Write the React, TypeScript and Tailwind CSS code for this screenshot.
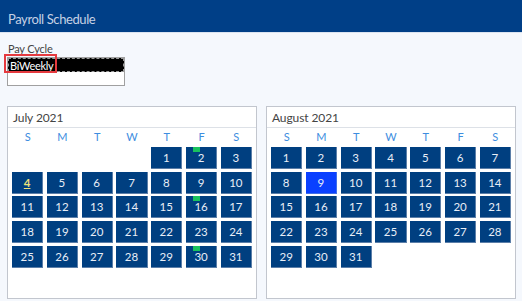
import React from "react";

// ── Data ───────────────────────────────────────────────────────────────────────

const WEEKDAYS = ["S", "M", "T", "W", "T", "F", "S"];

type Month = {
  title: string;
  offset: number;
  days: number;
  paydays?: number[];
  today?: number;
  selected?: number;
};

const MONTHS: Month[] = [
  { title: "July 2021", offset: 4, days: 31, paydays: [2, 16, 30], today: 4 },
  { title: "August 2021", offset: 0, days: 31, selected: 9 },
];

const FONT = "font-['Lato','Open_Sans',sans-serif]";

// ── Calendar ───────────────────────────────────────────────────────────────────

function MonthPanel({ month }: { month: Month }) {
  const cells: (number | null)[] = [
    ...Array.from({ length: month.offset }, () => null),
    ...Array.from({ length: month.days }, (_, i) => i + 1),
  ];

  return (
    <div className="w-[250px] h-[193px] bg-white border border-[#c2c6ce]">
      <div className="h-[21px] border-b border-[#dde1e7] px-[5px] pt-[2px] flex items-center text-[12px] text-[#444] tracking-[-0.1px]">
        {month.title}
      </div>
      <div className="px-[4px]">
        <div className="grid grid-cols-7 gap-x-[3.5px] h-[19px] items-center">
          {WEEKDAYS.map((d, i) => (
            <span key={i} className="text-center text-[11px] text-[#3d8de0]">
              {d}
            </span>
          ))}
        </div>
        <div className="grid grid-cols-7 gap-x-[3.5px] gap-y-[2.7px]">
          {cells.map((day, i) => {
            if (day === null) return <div key={i} className="h-[22px]" />;
            const isSelected = day === month.selected;
            const isToday = day === month.today;
            const isPayday = month.paydays?.includes(day);
            return (
              <div
                key={i}
                className={`relative h-[22px] flex items-center justify-center text-[11.5px] border-r border-b ${
                  isSelected
                    ? "bg-[#0a40ff] border-[#3f6ee8]"
                    : "bg-[#003f80] border-[#5b7ea8]"
                } ${isToday ? "text-[#ece27a] font-bold underline" : "text-[#e8eef7]"}`}
              >
                {isPayday && (
                  <span className="absolute left-[7px] top-0 w-[7px] h-[5px] bg-[#19c25e]" />
                )}
                {day}
              </div>
            );
          })}
        </div>
      </div>
    </div>
  );
}

// ── Page ───────────────────────────────────────────────────────────────────────

export default function App() {
  return (
    <div className={`w-[522px] h-[301px] bg-[#f5f8fd] overflow-hidden ${FONT}`}>
      {/* Title bar */}
      <div className="h-[33px] bg-[#003f87] border-b border-[#dbe4f1] flex items-end pl-[8px] pb-[6px]">
        <span className="text-[13px] text-[#c5d1e4] leading-none tracking-[-0.4px]">Payroll Schedule</span>
      </div>

      {/* Pay cycle picker */}
      <div className="pl-[7px] pt-[8px]">
        <p className="text-[11px] text-[#444] leading-[16px] pl-[1px] tracking-[-0.2px]">Pay Cycle</p>
        <div className="relative w-[118px] h-[29px] bg-white border border-[#a0a0a0]">
          <div className="h-[14px] bg-black border border-dashed border-[#9a9a9a] flex items-center pl-[1px]">
            <span className="text-[11px] text-white leading-none tracking-[-0.3px]">BiWeekly</span>
          </div>
          <div className="absolute -left-[4px] -top-[4px] w-[53px] h-[19px] border-2 border-solid border-[#e53a3f]" />
        </div>
      </div>

      {/* Calendars */}
      <div className="flex gap-[9px] pl-[7px] pt-[20px]">
        {MONTHS.map((m) => (
          <MonthPanel key={m.title} month={m} />
        ))}
      </div>
    </div>
  );
}
